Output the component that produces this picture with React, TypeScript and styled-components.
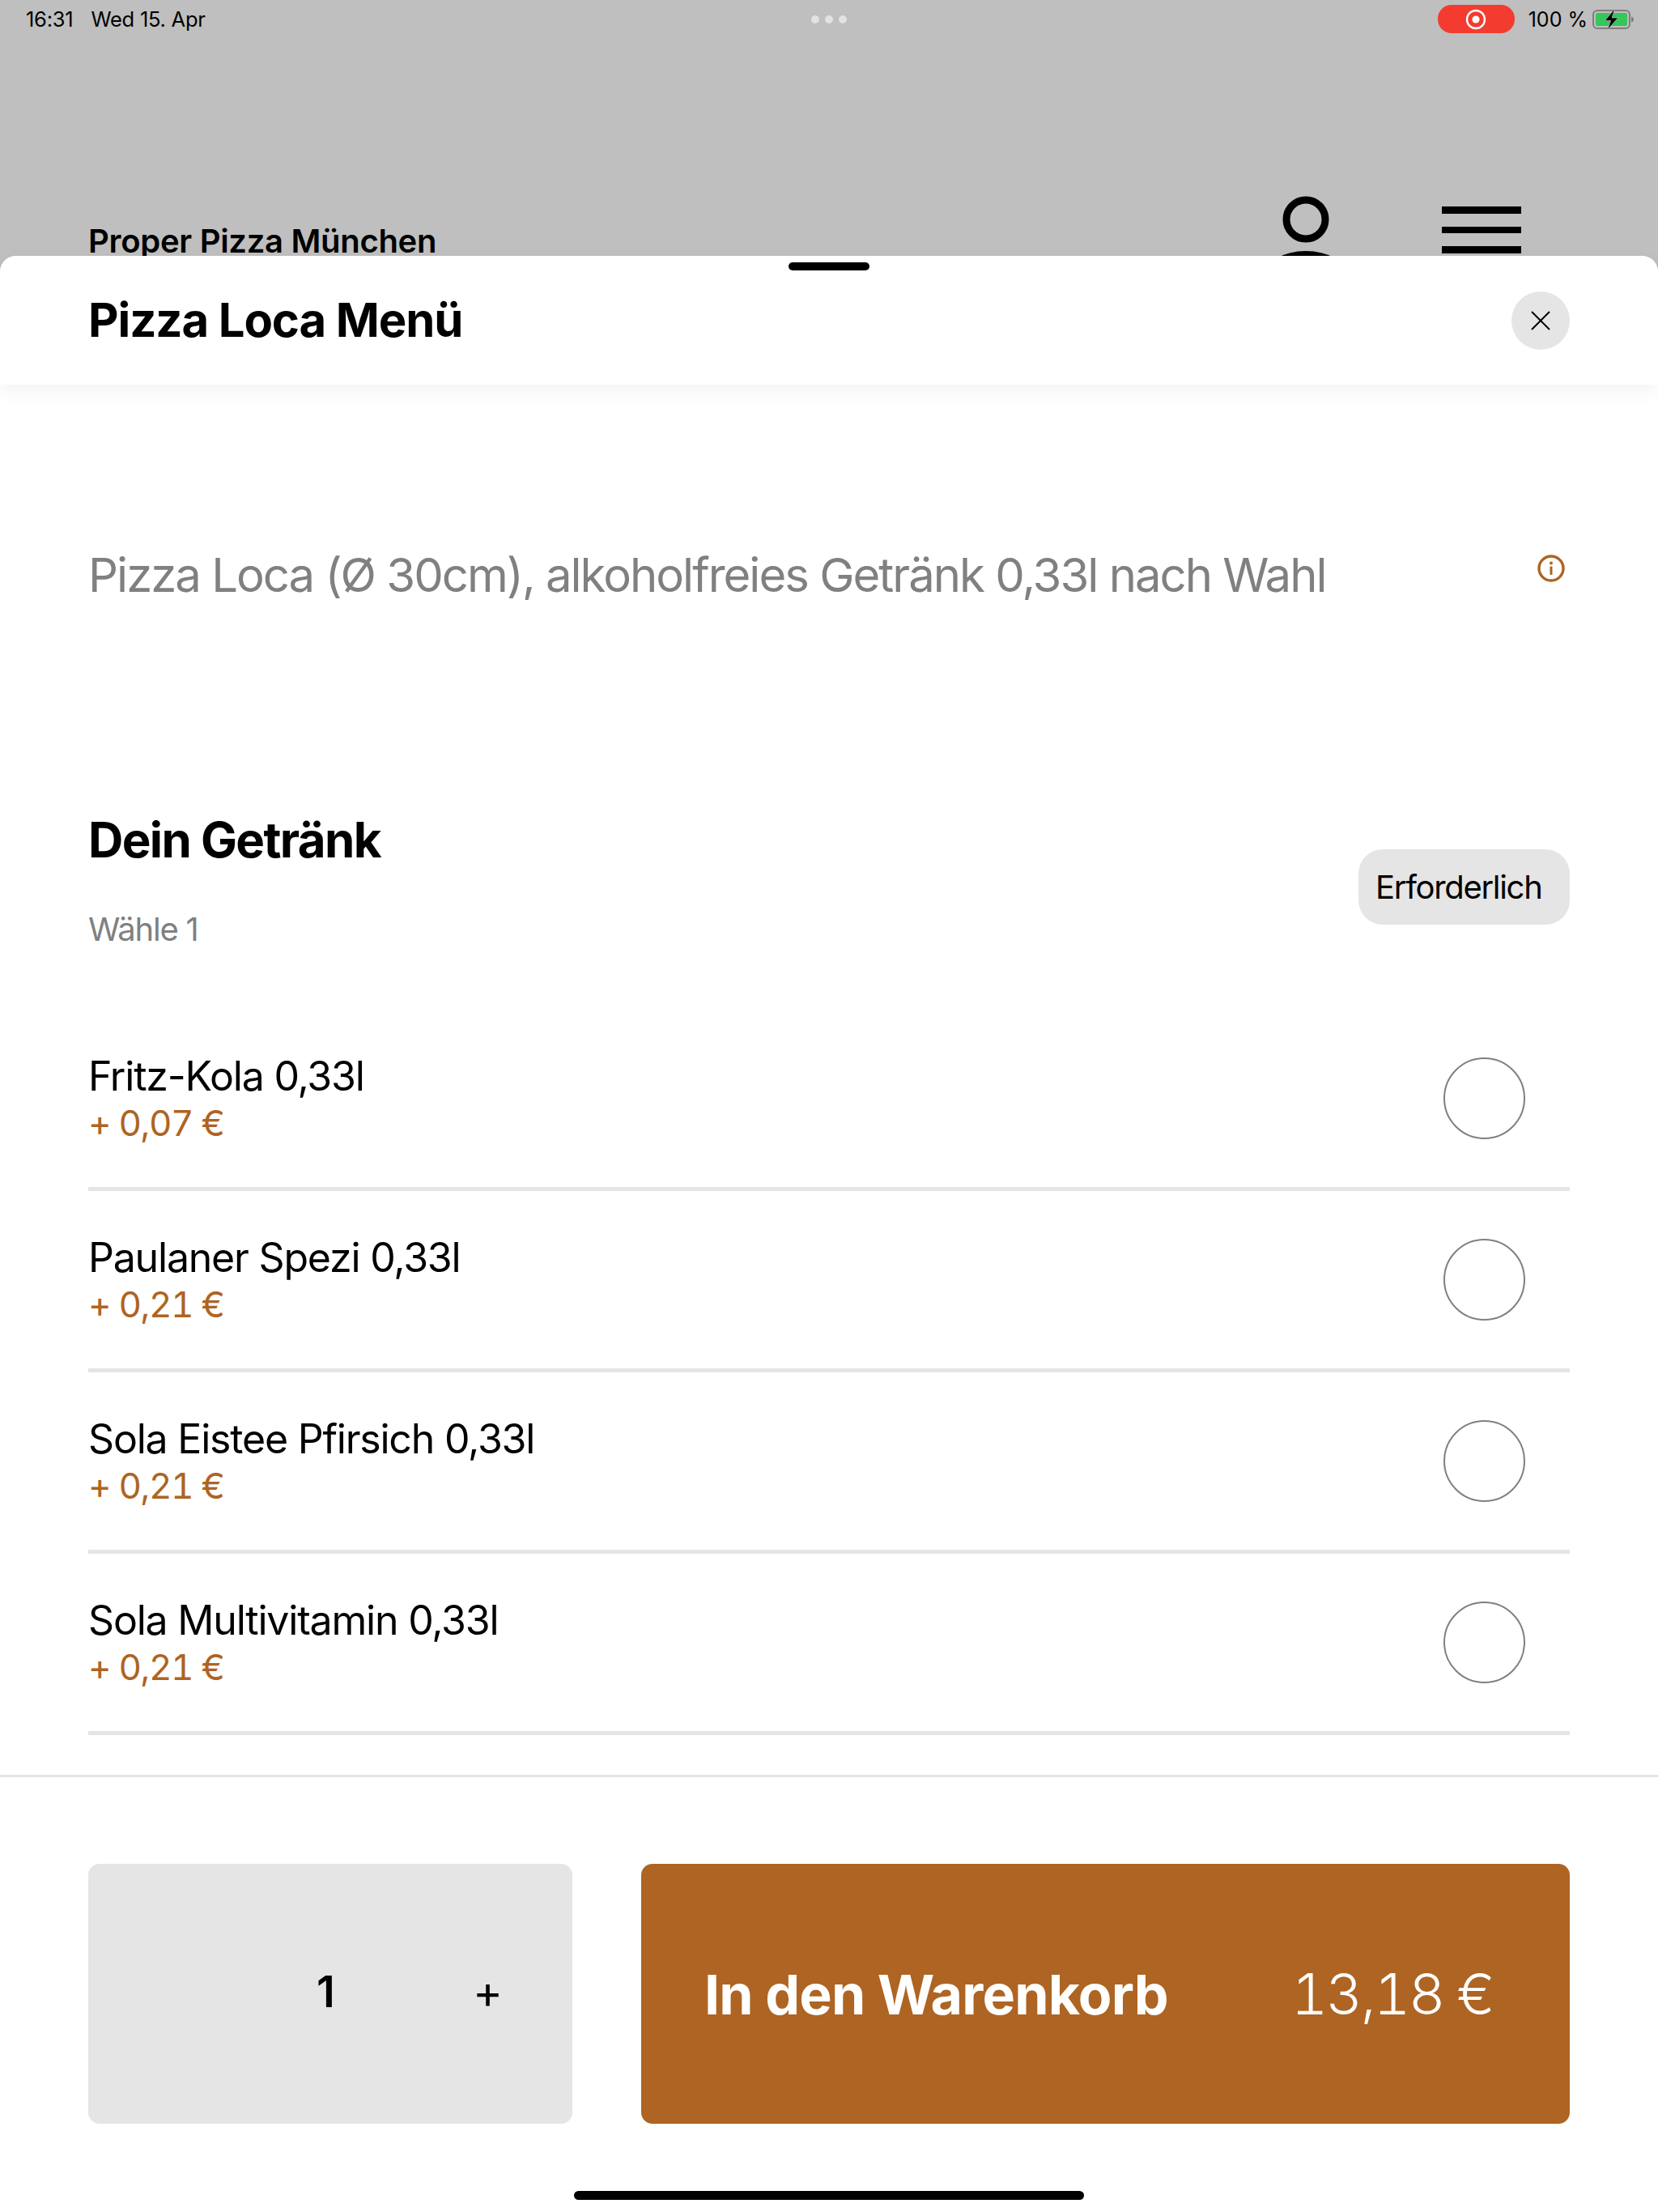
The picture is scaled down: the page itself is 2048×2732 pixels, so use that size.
import styled, { createGlobalStyle } from "styled-components";

const drinks = [
  { name: "Fritz-Kola 0,33l", price: "+ 0,07 €" },
  { name: "Paulaner Spezi 0,33l", price: "+ 0,21 €" },
  { name: "Sola Eistee Pfirsich 0,33l", price: "+ 0,21 €" },
  { name: "Sola Multivitamin 0,33l", price: "+ 0,21 €" },
];

const App = () => {
  return (
    <Page>
      <GlobalStyle />
      <StatusBar>
        <StatusLeft>
          <span>16:31</span>
          <span>Wed 15. Apr</span>
        </StatusLeft>
        <Dots>
          <Dot />
          <Dot />
          <Dot />
        </Dots>
        <StatusRight>
          <RecordPill>
            <svg width="26" height="26" viewBox="0 0 26 26">
              <circle cx="13" cy="13" r="11" fill="none" stroke="#fff" strokeWidth="2.4" />
              <circle cx="13" cy="13" r="4.6" fill="#fff" />
            </svg>
          </RecordPill>
          <BatteryText>100 %</BatteryText>
          <svg width="52" height="28" viewBox="0 0 52 28">
            <rect x="1" y="3" width="45" height="22" rx="5" fill="none" stroke="#7f7f7f" strokeWidth="2" />
            <rect x="4" y="6" width="39" height="16" rx="2.5" fill="#34c759" />
            <path d="M48 10.5c2 .5 3 2 3 3.5s-1 3-3 3.5z" fill="#7f7f7f" />
            <path
              d="M27.5 1 15.5 15.5h7.2L18.5 27l13-15h-7.4z"
              fill="#000"
              stroke="#bfbfbf"
              strokeWidth="0.6"
            />
          </svg>
        </StatusRight>
      </StatusBar>

      <PageHeader>
        <ShopName>Proper Pizza München</ShopName>
        <HeaderIcons>
          <svg width="66" height="84" viewBox="0 0 66 84">
            <circle cx="33" cy="29" r="24" fill="none" stroke="#000" strokeWidth="9" />
            <ellipse cx="33" cy="100" rx="52" ry="32" fill="#000" />
          </svg>
          <MenuIcon>
            <MenuBar />
            <MenuBar />
            <MenuBar />
          </MenuIcon>
        </HeaderIcons>
      </PageHeader>

      <Sheet>
        <SheetHeader>
          <Handle />
          <SheetTitle>Pizza Loca Menü</SheetTitle>
          <CloseButton>
            <svg width="24" height="24" viewBox="0 0 24 24">
              <path d="M1 1l22 22M23 1 1 23" stroke="#000" strokeWidth="2" fill="none" />
            </svg>
          </CloseButton>
        </SheetHeader>

        <SheetBody>
          <Description>
            <DescriptionText>
              Pizza Loca (Ø 30cm), alkoholfreies Getränk 0,33l nach Wahl
            </DescriptionText>
            <InfoIcon width="34" height="34" viewBox="0 0 34 34">
              <circle cx="17" cy="17" r="15" fill="none" stroke="#ae6422" strokeWidth="3.4" />
              <circle cx="17" cy="10.5" r="2" fill="#ae6422" />
              <rect x="15.5" y="14.5" width="3" height="10.5" rx="1" fill="#ae6422" />
            </InfoIcon>
          </Description>

          <SectionHead>
            <div>
              <SectionTitle>Dein Getränk</SectionTitle>
              <SectionHint>Wähle 1</SectionHint>
            </div>
            <RequiredBadge>Erforderlich</RequiredBadge>
          </SectionHead>

          <DrinkList>
            {drinks.map((drink) => (
              <DrinkRow key={drink.name}>
                <DrinkText>
                  <DrinkName>{drink.name}</DrinkName>
                  <DrinkPrice>{drink.price}</DrinkPrice>
                </DrinkText>
                <Radio />
              </DrinkRow>
            ))}
          </DrinkList>
        </SheetBody>

        <SheetFooter>
          <FooterRow>
            <Quantity>
              <QuantityValue>1</QuantityValue>
              <QuantityPlus>+</QuantityPlus>
            </Quantity>
            <AddButton>
              <AddLabel>In den Warenkorb</AddLabel>
              <AddPrice>13,18 €</AddPrice>
            </AddButton>
          </FooterRow>
          <HomeBar />
        </SheetFooter>
      </Sheet>
    </Page>
  );
};

export default App;

const GlobalStyle = createGlobalStyle`
  html, body {
    margin: 0;
    padding: 0;
    background: #fff;
  }
  * {
    box-sizing: border-box;
  }
`;

const Page = styled.div`
  position: relative;
  width: 2048px;
  height: 2732px;
  overflow: hidden;
  background: #bfbfbf;
  color: #000;
  font-family: Inter, "Liberation Sans", sans-serif;
`;

const StatusBar = styled.div`
  display: grid;
  grid-template-columns: 1fr auto 1fr;
  align-items: center;
  height: 47px;
  padding: 0 29px 0 32px;
`;

const StatusLeft = styled.div`
  display: flex;
  gap: 22px;
  font-size: 25.5px;
  letter-spacing: -0.25px;
`;

const Dots = styled.div`
  display: flex;
  gap: 7px;
  margin-right: 3px;
`;

const Dot = styled.div`
  width: 10px;
  height: 10px;
  border-radius: 50%;
  background: #e2e2e2;
`;

const StatusRight = styled.div`
  display: flex;
  align-items: center;
  justify-content: flex-end;
`;

const RecordPill = styled.div`
  display: flex;
  align-items: center;
  justify-content: center;
  width: 95px;
  height: 35px;
  border-radius: 17px;
  background: #f33b30;
`;

const BatteryText = styled.span`
  margin: 0 6px 0 17px;
  font-size: 25px;
`;

const PageHeader = styled.div`
  display: flex;
  justify-content: space-between;
  align-items: flex-start;
  padding: 191px 169px 0 109px;
`;

const ShopName = styled.div`
  margin-top: 36px;
  font-size: 40px;
  line-height: 48px;
  font-weight: 600;
  letter-spacing: -0.3px;
`;

const HeaderIcons = styled.div`
  display: flex;
  align-items: flex-start;
  gap: 135px;
  margin-top: 4px;
`;

const MenuIcon = styled.div`
  display: flex;
  flex-direction: column;
  gap: 16px;
  width: 98px;
  margin-top: 13px;
`;

const MenuBar = styled.div`
  height: 8.5px;
  background: #000;
`;

const Sheet = styled.div`
  position: absolute;
  top: 316px;
  left: 0;
  right: 0;
  bottom: 0;
  display: flex;
  flex-direction: column;
  border-radius: 20px 20px 0 0;
  background: #fff;
`;

const SheetHeader = styled.div`
  position: relative;
  z-index: 1;
  display: flex;
  flex: none;
  align-items: center;
  justify-content: space-between;
  height: 159px;
  padding: 0 109px;
  border-radius: 20px 20px 0 0;
  background: #fff;
  box-shadow: 0 8px 24px rgba(0, 0, 0, 0.05);
`;

const Handle = styled.div`
  position: absolute;
  top: 8px;
  left: 974px;
  width: 100px;
  height: 10px;
  border-radius: 5px;
  background: #000;
`;

const SheetTitle = styled.h1`
  margin: -2px 0 0;
  font-size: 58px;
  line-height: 70px;
  font-weight: 700;
  letter-spacing: -1.08px;
`;

const CloseButton = styled.div`
  display: flex;
  align-items: center;
  justify-content: center;
  width: 72px;
  height: 72px;
  border-radius: 50%;
  background: #e5e5e5;
`;

const SheetBody = styled.div`
  flex: 1;
  min-height: 0;
  overflow: hidden;
  padding: 0 109px;
`;

const Description = styled.div`
  display: flex;
  align-items: flex-start;
  justify-content: space-between;
  padding: 200px 6px 0 0;
`;

const DescriptionText = styled.div`
  font-size: 58px;
  line-height: 70px;
  letter-spacing: -1.98px;
  color: #808080;
`;

const InfoIcon = styled.svg`
  margin-top: 10px;
`;

const SectionHead = styled.div`
  display: flex;
  align-items: flex-start;
  justify-content: space-between;
  margin-top: 257px;
`;

const SectionTitle = styled.h2`
  margin: 0;
  font-size: 60px;
  line-height: 70px;
  font-weight: 700;
  letter-spacing: -1.6px;
`;

const SectionHint = styled.div`
  margin-top: 52px;
  font-size: 40px;
  line-height: 48px;
  letter-spacing: -1.2px;
  color: #808080;
`;

const RequiredBadge = styled.div`
  display: flex;
  align-items: center;
  width: 261px;
  height: 93px;
  margin-top: 47px;
  padding-left: 21px;
  border-radius: 30px;
  background: #e5e5e5;
  font-size: 40px;
  letter-spacing: -1.3px;
`;

const DrinkList = styled.div`
  margin-top: 75px;
`;

const DrinkRow = styled.div`
  display: flex;
  align-items: center;
  justify-content: space-between;
  height: 224px;
  padding-right: 55px;
  border-bottom: 5px solid #e5e5e5;
`;

const DrinkText = styled.div`
  padding-bottom: 2px;
`;

const DrinkName = styled.div`
  font-size: 50px;
  line-height: 60px;
  letter-spacing: -1.2px;
`;

const DrinkPrice = styled.div`
  margin-top: 3px;
  font-size: 44px;
  line-height: 50px;
  letter-spacing: -1.45px;
  font-variant-numeric: tabular-nums;
  color: #ae6422;
`;

const Radio = styled.div`
  width: 101px;
  height: 101px;
  border: 2px solid #808080;
  border-radius: 50%;
`;

const SheetFooter = styled.div`
  flex: none;
  border-top: 3px solid #e5e5e5;
  padding: 107px 0 15px;
`;

const FooterRow = styled.div`
  display: flex;
  gap: 85px;
  height: 321px;
  padding: 0 109px;
`;

const Quantity = styled.div`
  display: flex;
  align-items: center;
  justify-content: flex-end;
  gap: 170px;
  width: 598px;
  padding-right: 86px;
  border-radius: 14px;
  background: #e5e5e5;
`;

const QuantityValue = styled.span`
  margin-top: -6px;
  font-size: 54px;
  font-weight: 600;
`;

const QuantityPlus = styled.span`
  margin-top: -6px;
  font-size: 56px;
`;

const AddButton = styled.div`
  display: flex;
  flex: 1;
  align-items: center;
  justify-content: space-between;
  padding: 0 95px 0 78px;
  border-radius: 14px;
  background: #ae6422;
  color: #fff;
`;

const AddLabel = styled.span`
  font-size: 68px;
  font-weight: 700;
  letter-spacing: -0.8px;
`;

const AddPrice = styled.span`
  font-size: 70px;
  font-weight: 300;
  font-variant-numeric: tabular-nums;
  letter-spacing: -2.4px;
`;

const HomeBar = styled.div`
  width: 630px;
  height: 11px;
  margin: 83px auto 0;
  border-radius: 6px;
  background: #000;
`;
